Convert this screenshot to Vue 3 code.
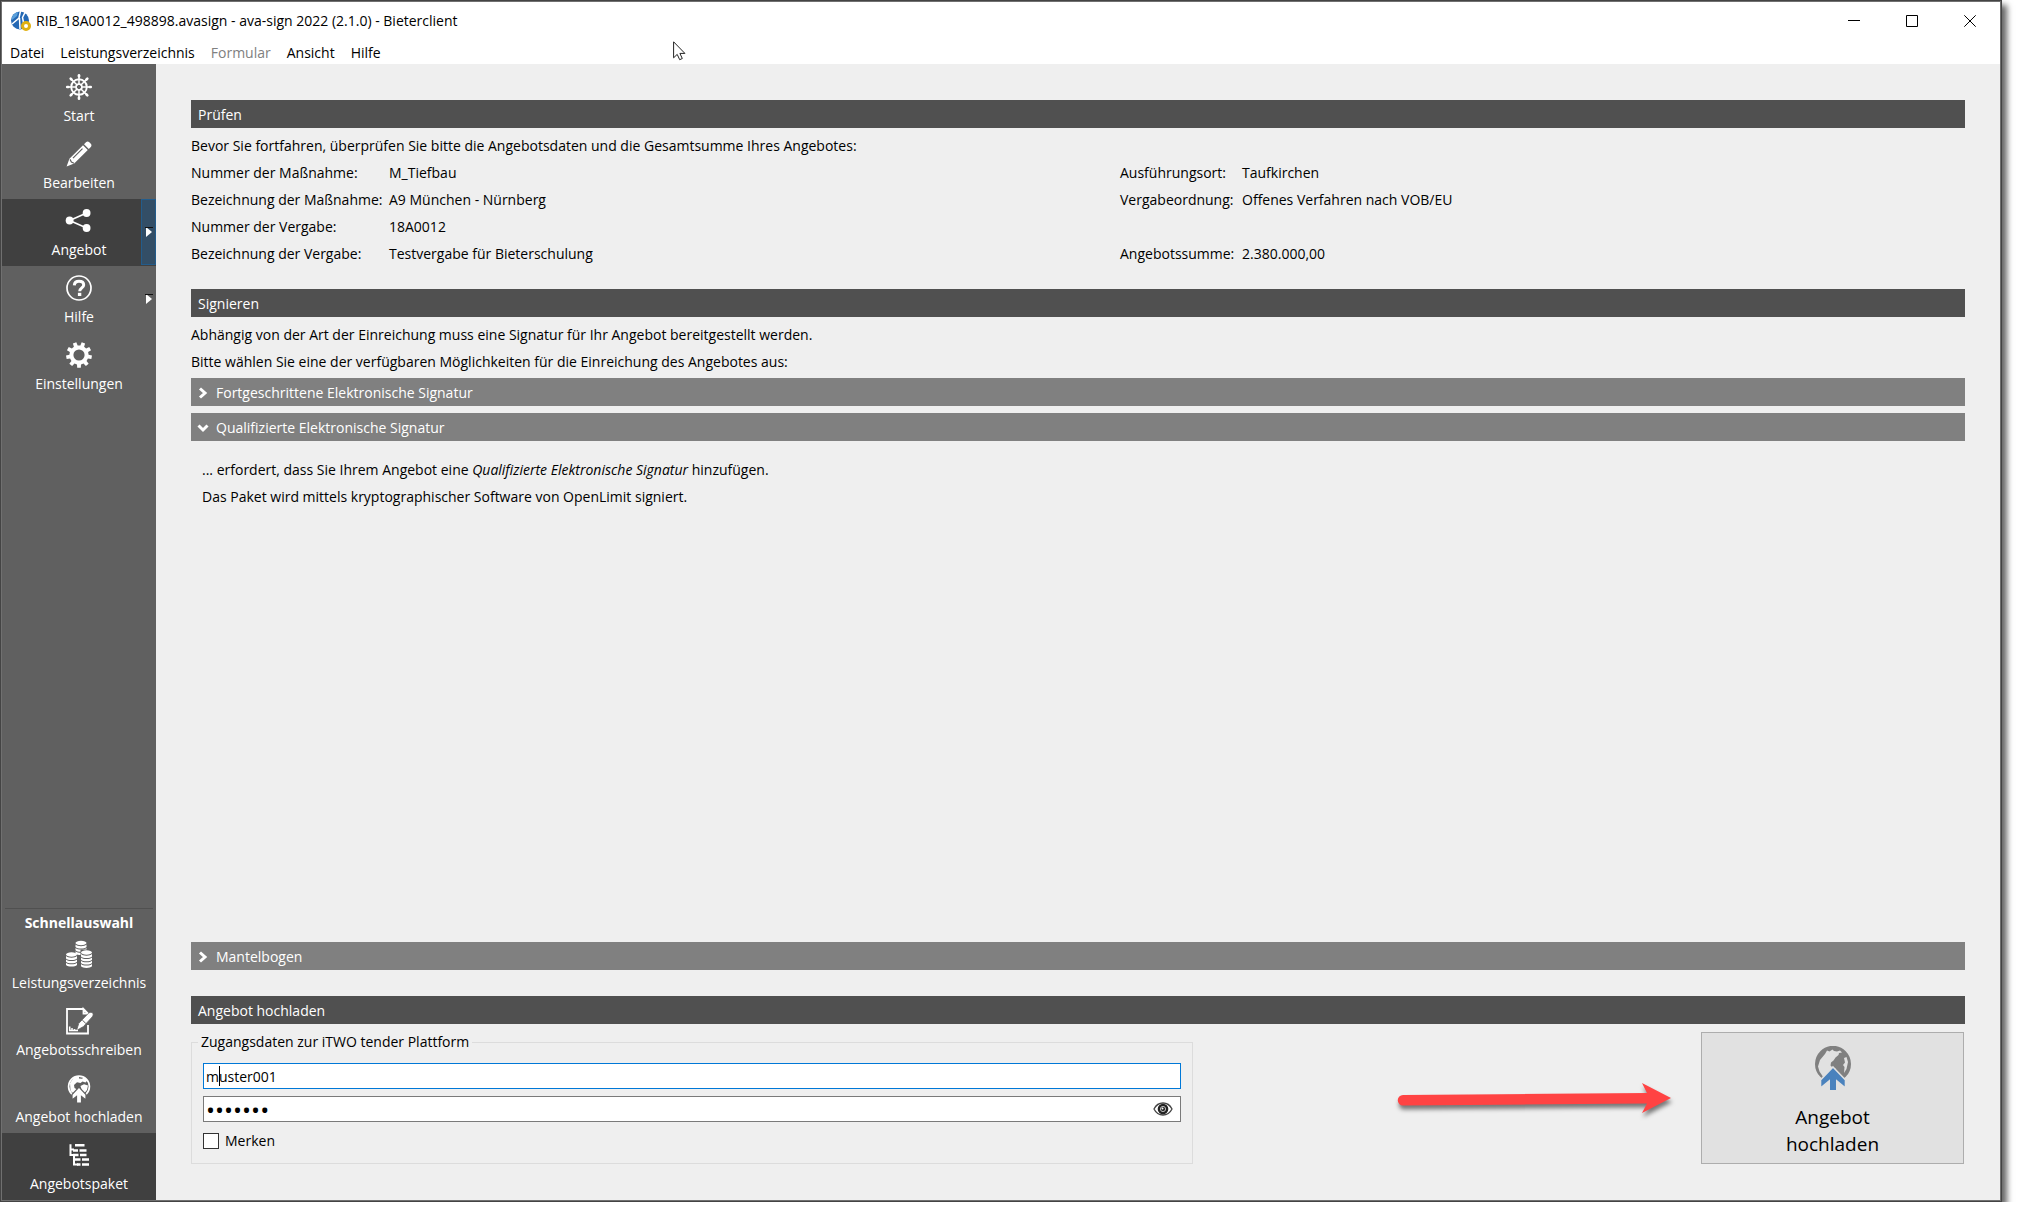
<script setup>
import { ref } from 'vue'

function gearPath(cx, cy, teeth, outer, inner) {
  const step = (Math.PI * 2) / teeth
  const pts = []
  for (let i = 0; i < teeth; i++) {
    const a = Math.PI / 2 + i * step
    const corners = [
      [inner, -0.3],
      [outer, -0.2],
      [outer, 0.2],
      [inner, 0.3],
    ]
    for (const [r, f] of corners) {
      pts.push(`${(cx + r * Math.cos(a + f * step)).toFixed(2)} ${(cy + r * Math.sin(a + f * step)).toFixed(2)}`)
    }
  }
  return `M${pts.join('L')}Z`
}

const spokes = Array.from({ length: 8 }, (_, i) => {
  const a = (i * Math.PI) / 4
  const c = Math.cos(a)
  const s = Math.sin(a)
  const p = (r) => `${(13 + r * c).toFixed(2)} ${(13 + r * s).toFixed(2)}`
  return `<path d="M${p(2)}L${p(12)}" stroke-width="1.5"/><path d="M${p(10.6)}L${p(11.8)}" stroke-width="2.6" stroke-linecap="round"/>`
}).join('')

function coinStack(x, y, count) {
  let out = `<ellipse cx="${x + 5.5}" cy="${y + 2}" rx="5.5" ry="2.2"/>`
  for (let i = 0; i < count; i++) {
    const t = y + 3.6 + i * 3.3
    out += `<path d="M${x} ${t}c1.200 1.200 3 1.600 5.500 1.600s4.300-.4 5.500-1.600v2.300c-1.200 1.200-3 1.600-5.500 1.600s-4.300-.4-5.500-1.600z"/>`
  }
  return out
}

const icons = {
  wheel: `<g fill="none" stroke="#fff"><circle cx="13" cy="13" r="7.800" stroke-width="1.900"/><circle cx="13" cy="13" r="3" stroke-width="1.500"/>${spokes}</g>`,
  pencil:
    '<path fill="#fff" d="M17 4.200l4.800 4.800L8.200 22.600 .6 25.400 3.400 17.800zM18 3.200l2-2c1-.9 2.300-.9 3.300 0l1.500 1.500c.9 1 .9 2.300 0 3.300l-2 2z"/><path fill="none" stroke="#606060" stroke-width="1.200" d="M16.500 7.600L7 17.100M4 18.400l1.400 2.600 2.600 1.200"/>',
  share:
    '<g fill="#fff"><circle cx="3.600" cy="12.500" r="3.900"/><circle cx="20.600" cy="5" r="3.900"/><circle cx="20.600" cy="20" r="3.900"/></g><path fill="none" stroke="#fff" stroke-width="1.600" d="M20.600 5L3.600 12.500l17 7.500"/>',
  help:
    '<circle cx="13" cy="13" r="12" fill="none" stroke="#fff" stroke-width="1.700"/><path d="M8.300 10.300C8.500 7.500 10.500 6.200 13 6.200c2.700 0 4.700 1.400 4.700 3.700 0 2.900-4 3-4 6.300" fill="none" stroke="#fff" stroke-width="3"/><rect x="11.900" y="17.800" width="3.400" height="3.200" fill="#fff"/>',
  gear: `<path fill="#fff" fill-rule="evenodd" d="${gearPath(13, 13, 9, 13, 9.6)}M13 7.400a5.600 5.600 0 1 0 0 11.200a5.600 5.600 0 1 0 0-11.200z"/>`,
  coins: `<g fill="#fff">${coinStack(9.5, 0, 3)}${coinStack(0, 11.5, 3)}</g><path fill="#606060" d="M14.500 8.500h12V26h-12z"/><g fill="#fff">${coinStack(15, 9.5, 4)}</g>`,
  letter:
    '<path fill="none" stroke="#fff" stroke-width="1.800" d="M17.500 1H1v24.500h21V17M22 7V5.500L17.500 1v4.500H22"/><path fill="#fff" stroke="#606060" stroke-width=".8" d="M26 4.500c1.600 1.200 1.400 2.800.2 4.400L17.500 18.500l-7 4 2.300-7.200L21.500 6.200c1.500-1.500 3-2.400 4.500-1.700z"/><path fill="none" stroke="#606060" d="M16.500 12.200l3.500 3.500"/><path fill="none" stroke="#fff" stroke-width="1.500" d="M3.700 22.500v-4M6 22.500v-2.500M8.500 22.500v-1.500M3 22.500h9"/>',
  globe:
    '<g transform="translate(2 0)"><circle cx="11" cy="11.500" r="10.400" fill="none" stroke="#fff" stroke-width="1.700"/><path fill="#fff" d="M2 8l4-5.500 5-1.500v2.500l3 .3 2-1.500 3.500 3-2 2.200-3-1-2 1.500-3.500-.8L6 10l.5 3 3.500 2-3 4.500L2.500 16zM12.500 11l3.500-1.700 4 1.200-1 4.500-3 3.500-2-2.500z"/><path fill="#fff" stroke="#606060" stroke-width="1.200" d="M11 12.200l7 7.300V25l-4.500-3.500V28h-5v-6.500L4 25v-5.500z"/></g>',
  tree:
    '<g fill="none" stroke="#fff" transform="translate(0 1)"><path stroke-width="2" d="M4.500 1.200V12H7M8 12v9.500h4M4.500 6.500H8"/><path stroke-width="2.500" d="M9 2.200h9.500M7 7.500h5M13.500 7.500h7M7 12h5.500M14 12h6.500M9 16.600h5.500M16 16.600h7M11 21.500h3.500M16 21.500h7"/></g>',
}

const mainNav = [
  { label: 'Start', icon: 'wheel' },
  { label: 'Bearbeiten', icon: 'pencil' },
  { label: 'Angebot', icon: 'share', active: true, more: true },
  { label: 'Hilfe', icon: 'help', more: true },
  { label: 'Einstellungen', icon: 'gear' },
]
const quickNav = [
  { label: 'Leistungsverzeichnis', icon: 'coins' },
  { label: 'Angebotsschreiben', icon: 'letter' },
  { label: 'Angebot hochladen', icon: 'globe' },
  { label: 'Angebotspaket', icon: 'tree', active: true },
]
const menus = ['Datei', 'Leistungsverzeichnis', 'Formular', 'Ansicht', 'Hilfe']

const details = [
  ['Nummer der Maßnahme:', 'M_Tiefbau', 'Ausführungsort:', 'Taufkirchen'],
  ['Bezeichnung der Maßnahme:', 'A9 München - Nürnberg', 'Vergabeordnung:', 'Offenes Verfahren nach VOB/EU'],
  ['Nummer der Vergabe:', '18A0012', '', ''],
  ['Bezeichnung der Vergabe:', 'Testvergabe für Bieterschulung', 'Angebotssumme:', '2.380.000,00'],
]

const user = ref('muster001')
const password = ref('muster1')
const remember = ref(false)
</script>

<template>
  <div class="window">
    <header>
      <div class="titlebar">
        <svg class="logo" viewBox="0 0 20 20" aria-hidden="true">
          <circle cx="9" cy="9.500" r="9" fill="#2468b4" />
          <path d="M1 6a9 9 0 0 1 6-5L6 5 1 9z" fill="#5aa0dc" />
          <path d="M9.500 0L8 7 1 13M14 1.500l-2.500 5L13 14M8.500 7L9 18" fill="none" stroke="#fff" stroke-width="1.500" />
          <circle cx="15" cy="15" r="3.500" fill="#fff" stroke="#e0b010" stroke-width="3" />
        </svg>
        <span class="title">RIB_18A0012_498898.avasign - ava-sign 2022 (2.1.0) - Bieterclient</span>
        <div class="controls">
          <button type="button" aria-label="Minimieren">
            <svg viewBox="0 0 12 12"><path d="M0 5.500h12" /></svg>
          </button>
          <button type="button" aria-label="Maximieren">
            <svg viewBox="0 0 12 12"><path d="M.5.5h11v11H.5z" /></svg>
          </button>
          <button type="button" aria-label="Schließen">
            <svg viewBox="0 0 12 12"><path d="M.3.3l11.400 11.400M11.700.3L.3 11.700" /></svg>
          </button>
        </div>
      </div>
      <nav class="menubar">
        <button v-for="m in menus" :key="m" type="button" :disabled="m === 'Formular'">{{ m }}</button>
      </nav>
      <svg class="pointer" viewBox="0 0 13 20" aria-hidden="true">
        <path d="M.6.800v16l3.600-3.400 2.500 5.300 2.600-1.200-2.400-5.100h5z" fill="#fff" stroke="#222" />
      </svg>
    </header>

    <div class="body">
      <aside>
        <nav>
          <button v-for="n in mainNav" :key="n.label" type="button" class="item" :class="{ active: n.active }">
            <svg class="icon" viewBox="0 0 26 26" v-html="icons[n.icon]"></svg>
            <span>{{ n.label }}</span>
            <span v-if="n.more" class="more">
              <svg viewBox="0 0 8 10"><path d="M1 0v10l6-5z" fill="#fff" /><path d="M0 .5h8" stroke="#111" /></svg>
            </span>
          </button>
        </nav>
        <nav class="quick">
          <h2>Schnellauswahl</h2>
          <button v-for="n in quickNav" :key="n.label" type="button" class="item" :class="{ active: n.active }">
            <svg class="icon" viewBox="0 0 26 26" v-html="icons[n.icon]"></svg>
            <span>{{ n.label }}</span>
          </button>
        </nav>
      </aside>

      <main>
        <section>
          <h1 class="bar">Prüfen</h1>
          <p class="first">Bevor Sie fortfahren, überprüfen Sie bitte die Angebotsdaten und die Gesamtsumme Ihres Angebotes:</p>
          <div class="details">
            <template v-for="row in details" :key="row[0]">
              <span v-for="(cell, i) in row" :key="i">{{ cell }}</span>
            </template>
          </div>
        </section>

        <section class="sign">
          <h1 class="bar">Signieren</h1>
          <p class="first">Abhängig von der Art der Einreichung muss eine Signatur für Ihr Angebot bereitgestellt werden.</p>
          <p>Bitte wählen Sie eine der verfügbaren Möglichkeiten für die Einreichung des Angebotes aus:</p>
          <button type="button" class="fold">
            <svg viewBox="0 0 12 12"><path d="M3 1.500L8 6l-5 4.500" /></svg>Fortgeschrittene Elektronische Signatur
          </button>
          <button type="button" class="fold">
            <svg viewBox="0 0 12 12"><path d="M1.500 3.500L6 8l4.500-4.500" /></svg>Qualifizierte Elektronische Signatur
          </button>
          <div class="panel">
            <p>... erfordert, dass Sie Ihrem Angebot eine <em>Qualifizierte Elektronische Signatur</em> hinzufügen.</p>
            <p>Das Paket wird mittels kryptographischer Software von OpenLimit signiert.</p>
          </div>
          <button type="button" class="fold">
            <svg viewBox="0 0 12 12"><path d="M3 1.500L8 6l-5 4.500" /></svg>Mantelbogen
          </button>
        </section>

        <section class="upload">
          <h1 class="bar">Angebot hochladen</h1>
          <div class="upload-row">
            <fieldset>
              <legend>Zugangsdaten zur iTWO tender Plattform</legend>
              <div class="field">
                <input v-model="user" class="current" type="text" aria-label="Benutzername" />
                <i class="caret"></i>
              </div>
              <div class="field">
                <input v-model="password" class="secret" type="password" aria-label="Passwort" />
                <button type="button" class="eye" aria-label="Passwort anzeigen">
                  <svg viewBox="0 0 20 14">
                    <path d="M1 7C3 3 6 1 10 1s7 2 9 6c-2 4-5 6-9 6S3 11 1 7z" fill="#fff" stroke="#444" stroke-width="1.300" />
                    <circle cx="10" cy="7" r="5.300" fill="#222" />
                    <circle cx="10" cy="7" r="2.600" fill="none" stroke="#bbb" />
                    <circle cx="9.500" cy="6.500" r="1" fill="#fff" />
                  </svg>
                </button>
              </div>
              <label class="remember"><input v-model="remember" type="checkbox" />Merken</label>
            </fieldset>
            <div class="submit">
              <svg class="arrow" viewBox="0 0 280 40" aria-hidden="true">
                <path d="M6 15L250 13 245 3 274 18 245 33 250 23.500 6 25.500a5 5 0 0 1 0-10.500z" fill="#ff4343" />
              </svg>
              <button type="button" class="send">
                <svg viewBox="0 0 36 44" aria-hidden="true">
                  <ellipse cx="18" cy="18" rx="16.800" ry="17" fill="#808080" stroke="#808080" stroke-width="2.400" />
                  <path d="M5 14l5-6 2-3.500 2.500 1 3-2 1.500 1.500 3 .5 3-1 2 2-3 .5-.5 2-3 2.500-2 3-2.500 2-.5 3 2 2 3 1 .5 3-4 3-3 5-5 1-1.500-4.500-3-4.500-1.500-5z" fill="#e1e1e1" />
                  <path d="M29 12l2.500-1 1.500 5-1.500 7-2.500 4 .5-6-1.500-2 2-2.500z" fill="#e1e1e1" />
                  <path d="M18 21L30.500 34v8L21.800 35v10h-7.600V35L5.500 42v-8z" fill="#4a82bd" stroke="#e1e1e1" stroke-width="1.600" />
                </svg>
                <span>Angebot<br />hochladen</span>
              </button>
            </div>
          </div>
        </section>
      </main>
    </div>
  </div>
</template>

<style>
body {
  margin: 0;
  background: #fff;
}
</style>

<style scoped>
.window,
.window * {
  box-sizing: border-box;
}
.window {
  display: flex;
  flex-direction: column;
  min-height: calc(100vh - 15px);
  margin-right: 15px;
  padding: 1px;
  border: 1px solid #444;
  background: #707070;
  box-shadow: 5px 5px 6px rgba(0, 0, 0, 0.6);
  font: 14px/20px "Open Sans", "Noto Sans", sans-serif;
  color: #000;
}
button {
  padding: 0;
  border: 0;
  background: none;
  font: inherit;
  color: inherit;
}
h1,
h2,
p {
  margin: 0;
  font-size: 14px;
  font-weight: 400;
}
header {
  position: relative;
  background: #fff;
}
.titlebar {
  display: flex;
  align-items: center;
  height: 38px;
  padding: 0 1px 0 9px;
}
.logo {
  width: 20px;
  height: 20px;
  margin-right: 5px;
}
.title {
  flex: 1;
}
.controls {
  display: flex;
}
.controls button {
  display: flex;
  align-items: center;
  justify-content: center;
  width: 58px;
  height: 38px;
}
.controls svg {
  width: 12px;
  height: 12px;
  fill: none;
  stroke: #000;
}
.menubar {
  display: flex;
  gap: 16px;
  height: 24px;
  padding: 2px 0 0 8px;
}
.menubar button:disabled {
  color: #808080;
}
.pointer {
  position: absolute;
  left: 671px;
  top: 39px;
  width: 13px;
  height: 20px;
}
.body {
  flex: 1;
  display: flex;
}
aside {
  display: flex;
  flex-direction: column;
  justify-content: space-between;
  flex: none;
  width: 154px;
  padding-top: 1px;
  background: #606060;
  color: #fff;
}
.item {
  position: relative;
  display: flex;
  flex-direction: column;
  align-items: center;
  gap: 6px;
  width: 100%;
  height: 67px;
  padding-top: 9px;
  white-space: nowrap;
}
.item.active {
  background: #404040;
}
.icon {
  width: 26px;
  height: 26px;
  overflow: visible;
}
.more {
  position: absolute;
  top: 0;
  right: 0;
  display: flex;
  align-items: center;
  justify-content: center;
  width: 15px;
  height: 66px;
}
.active .more {
  border: 1px solid #225c8c;
  background: #334e66;
}
.more svg {
  width: 8px;
  height: 10px;
}
.quick h2 {
  margin: 0 3px;
  height: 24px;
  border-top: 1px solid #505050;
  line-height: 28px;
  font-weight: 700;
  text-align: center;
}
main {
  flex: 1;
  display: flex;
  flex-direction: column;
  min-width: 0;
  padding: 36px 35px;
  background: #efefef;
}
main p {
  line-height: 27px;
}
.bar {
  padding: 2px 0 0 7px;
  background: #505050;
  color: #fff;
  line-height: 26px;
}
.first {
  padding-top: 4px;
}
.details {
  display: grid;
  grid-template-columns: 198px 731fr 122px 723fr;
  line-height: 27px;
  white-space: nowrap;
}
.sign {
  flex: 1;
  display: flex;
  flex-direction: column;
  padding-top: 22px;
}
.fold {
  display: flex;
  align-items: center;
  gap: 7px;
  height: 28px;
  margin-top: 7px;
  padding: 2px 0 0 6px;
  background: #808080;
  color: #fff;
}
p + .fold {
  margin-top: 3px;
}
.fold svg {
  width: 12px;
  height: 12px;
  fill: none;
  stroke: #fff;
  stroke-width: 3;
}
.panel {
  flex: 1;
  padding: 15px 11px;
}
.upload {
  padding-top: 26px;
}
.upload-row {
  display: grid;
  grid-template-columns: minmax(0, 13fr) minmax(0, 10fr);
  align-items: start;
  padding: 8px 1px 0 0;
}
fieldset {
  min-width: 0;
  height: 132px;
  margin: 0;
  padding: 11px;
  border: 1px solid #dcdcdc;
}
.submit {
  display: flex;
  justify-content: flex-end;
}
legend {
  margin-left: -5px;
  padding: 0 3px;
}
.field {
  position: relative;
  display: flex;
  margin-bottom: 7px;
}
.field input {
  width: 100%;
  height: 26px;
  padding: 0 2px;
  border: 1px solid #7a7a7a;
  outline: 0;
  background: #fff;
  font: inherit;
}
.field .current {
  border-color: #0078d7;
}
.field .secret {
  font-size: 24px;
}
.caret {
  position: absolute;
  left: 16px;
  top: 3px;
  width: 1px;
  height: 20px;
  background: #000;
}
.eye {
  position: absolute;
  right: 8px;
  top: 6px;
  width: 20px;
  height: 14px;
}
.eye svg {
  display: block;
}
.remember {
  display: flex;
  align-items: center;
  gap: 6px;
  width: max-content;
  margin-top: 9px;
}
.remember input {
  appearance: none;
  width: 16px;
  height: 16px;
  margin: 0;
  border: 1px solid #333;
  background: #fff;
}
.arrow {
  flex: none;
  width: 280px;
  height: 40px;
  margin: 48px 24px 0 0;
  filter: drop-shadow(1px 4px 2px rgba(0, 0, 0, 0.5));
}
.send {
  display: flex;
  flex-direction: column;
  flex: none;
  align-items: center;
  gap: 14px;
  width: 263px;
  height: 132px;
  padding-top: 13px;
  border: 1px solid #adadad;
  background: #e1e1e1;
  font-size: 19px;
  line-height: 27px;
}
.send svg {
  width: 36px;
  height: 44px;
}
</style>
